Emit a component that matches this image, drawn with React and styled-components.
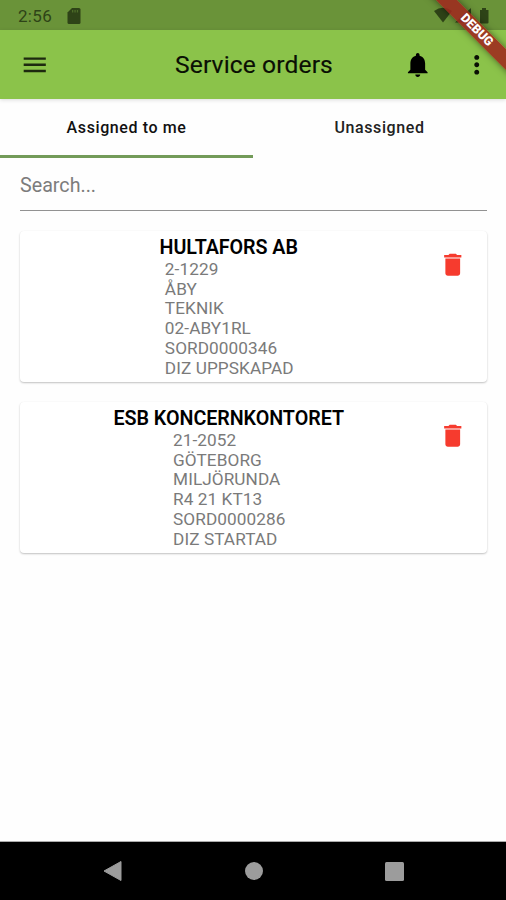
import React from "react";
import styled, { createGlobalStyle } from "styled-components";

const Global = createGlobalStyle`
  *, *::before, *::after { box-sizing: border-box; }
  body { margin: 0; font-family: Roboto, "Liberation Sans", sans-serif; color: #000; }
`;

const Screen = styled.div`
  position: relative;
  display: flex;
  flex-direction: column;
  width: 506px;
  height: 900px;
  overflow: hidden;
  background: #fefefe;
`;

const StatusBar = styled.div`
  display: flex;
  align-items: center;
  height: 30px;
  flex: none;
  padding: 1px 16px 0 18px;
  background: #6a9339;
  color: #2e4317;
`;

const Clock = styled.span`
  width: 49px;
  font-size: 17px;
  line-height: 20px;
  letter-spacing: 0.3px;
`;

const StatusIcons = styled.div`
  display: flex;
  align-items: center;
  margin-left: auto;
`;

const Glyph = styled.svg`
  display: block;
  flex: none;
  fill: currentColor;
`;

const AppBar = styled.header`
  display: grid;
  grid-template-columns: 70px 1fr 60px 58px;
  align-items: center;
  justify-items: center;
  height: 69px;
  flex: none;
  z-index: 1;
  background: #8bc34a;
  box-shadow: 0 1px 4px rgba(0, 0, 0, 0.14);
`;

const IconButton = styled.button`
  display: flex;
  padding: 0;
  border: 0;
  background: none;
  color: ${(p) => p.$color || "#0a0f04"};
`;

const Title = styled.h1`
  margin: 0;
  padding: 1px 0 0 50px;
  justify-self: center;
  color: #0a0f04;
  font-size: 24.6px;
  font-weight: 400;
  line-height: 30px;
  letter-spacing: 0.12px;
  white-space: nowrap;
  -webkit-text-stroke: 0.15px currentColor;
`;

const Tabs = styled.nav`
  display: flex;
  height: 59px;
  flex: none;
`;

const Tab = styled.button`
  flex: 1;
  padding: 1px 0 0;
  border: 0;
  border-bottom: 3px solid ${(p) => (p.$active ? "#739b59" : "transparent")};
  background: none;
  color: ${(p) => (p.$active ? "#111" : "#222")};
  font: 500 16px/20px Roboto, sans-serif;
  letter-spacing: 0.6px;
`;

const Search = styled.input`
  height: 53px;
  flex: none;
  margin: 0 19px 0 20px;
  padding: 2px 0 0;
  border: 0;
  border-bottom: 1.5px solid #929292;
  border-radius: 0;
  outline: 0;
  background: none;
  font: 400 19.7px/24px Roboto, sans-serif;
  &::placeholder { color: #7c7c7c; opacity: 1; }
`;

const Orders = styled.main`
  display: flex;
  flex: 1;
  flex-direction: column;
  gap: 20px;
  padding: 20px 19px 0 20px;
`;

const Card = styled.article`
  display: flex;
  height: 151px;
  padding: 5px 20px 0 0;
  border-radius: 4px;
  background: #fff;
  box-shadow: 0 1px 2px rgba(0, 0, 0, 0.24), 0 0 1px rgba(0, 0, 0, 0.04);
`;

const CardBody = styled.div`
  display: flex;
  flex: 1;
  flex-direction: column;
  align-items: center;
`;

const Customer = styled.h2`
  margin: 0 0 1px;
  font-size: 19.7px;
  font-weight: 600;
  line-height: 23px;
  letter-spacing: -0.05px;
`;

const Details = styled.div`
  padding-left: 1px;
  color: #7a7a7a;
  font-size: 17.2px;
  line-height: 19.7px;
  letter-spacing: 0.08px;
`;

const DeleteSlot = styled.div`
  padding-top: 14px;
`;

const NavBar = styled.footer`
  display: grid;
  grid-template-columns: 112px 1fr 112px;
  align-items: center;
  justify-items: center;
  height: 58px;
  flex: none;
  padding: 0 56px 0 57px;
  background: #000;
  color: #9c9c9c;
  box-shadow: 0 -1px 0 #ababab;
`;

/* Ribbon lies across the top right corner, over both bars. */
const Ribbon = styled.div`
  position: absolute;
  z-index: 2;
  top: 22.3px;
  left: 417px;
  width: 118px;
  height: 14.8px;
  padding-left: 2px;
  transform: rotate(45deg);
  background: rgba(158, 40, 30, 0.87);
  box-shadow: 0 0 7px rgba(0, 0, 0, 0.5);
  color: #fff;
  font-size: 12.5px;
  font-weight: 900;
  line-height: 14px;
  text-align: center;
`;

const paths = {
  menu: "M3 18h18v-2H3v2zm0-5h18v-2H3v2zm0-7v2h18V6H3z",
  bell: "M12 22c1.1 0 2-.9 2-2h-4c0 1.1.9 2 2 2zm6-6v-5c0-3.07-1.63-5.64-4.5-6.32V4c0-.83-.67-1.5-1.5-1.5s-1.5.67-1.5 1.5v.68C7.64 5.36 6 7.92 6 11v5l-2 2v1h16v-1l-2-2z",
  more: "M12 8c1.1 0 2-.9 2-2s-.9-2-2-2-2 .9-2 2 .9 2 2 2zm0 2c-1.1 0-2 .9-2 2s.9 2 2 2 2-.9 2-2-.9-2-2-2zm0 6c-1.1 0-2 .9-2 2s.9 2 2 2 2-.9 2-2-.9-2-2-2z",
  trash: "M6 19c0 1.1.9 2 2 2h8c1.1 0 2-.9 2-2V7H6v12zM19 4h-3.500l-1-1h-5l-1 1H5v2h14V4z",
};

function Icon({ name }) {
  return (
    <Glyph width="29.5" height="29.5" viewBox="0 0 24 24" aria-hidden="true">
      <path d={paths[name]} />
    </Glyph>
  );
}

const orders = [
  {
    customer: "HULTAFORS AB",
    details: ["2-1229", "ÅBY", "TEKNIK", "02-ABY1RL", "SORD0000346", "DIZ UPPSKAPAD"],
  },
  {
    customer: "ESB KONCERNKONTORET",
    details: ["21-2052", "GÖTEBORG", "MILJÖRUNDA", "R4 21 KT13", "SORD0000286", "DIZ STARTAD"],
  },
];

function OrderCard({ order }) {
  return (
    <Card>
      <CardBody>
        <Customer>{order.customer}</Customer>
        <Details>
          {order.details.map((line) => (
            <div key={line}>{line}</div>
          ))}
        </Details>
      </CardBody>
      <DeleteSlot>
        <IconButton $color="#f63b2e" aria-label="Delete order">
          <Icon name="trash" />
        </IconButton>
      </DeleteSlot>
    </Card>
  );
}

export default function App() {
  return (
    <>
      <Global />
      <Screen>
        <StatusBar>
          <Clock>2:56</Clock>
          <Glyph width="14" height="16" viewBox="0 0 14 16">
            <path d="M5 0h7a1.500 1.500 0 0 1 1.500 1.500v13A1.500 1.500 0 0 1 12 16H2a1.500 1.500 0 0 1-1.500-1.500V4.500z" />
            <path d="M5 2h1.300v2.500H5zM7.400 2h1.300v2.500H7.400zM9.800 2h1.300v2.500H9.800z" fill="#4d6d29" />
          </Glyph>
          <StatusIcons>
            <Glyph width="56" height="17" viewBox="0 0 56 17">
              <path d="M0 4Q9 -2.500 18 4L9 15.500z" />
              <path d="M37 1v14.500H21z" />
              <path d="M46 3h2V1h4v2h2.500v12.500a1 1 0 0 1-1 1H47a1 1 0 0 1-1-1z" />
            </Glyph>
          </StatusIcons>
        </StatusBar>
        <AppBar>
          <IconButton aria-label="Menu" $color="#1d290f"><Icon name="menu" /></IconButton>
          <Title>Service orders</Title>
          <IconButton aria-label="Notifications" $color="#000"><Icon name="bell" /></IconButton>
          <IconButton aria-label="More options"><Icon name="more" /></IconButton>
        </AppBar>
        <Tabs>
          <Tab $active>Assigned to me</Tab>
          <Tab>Unassigned</Tab>
        </Tabs>
        <Search placeholder="Search..." />
        <Orders>
          {orders.map((order) => (
            <OrderCard key={order.customer} order={order} />
          ))}
        </Orders>
        <NavBar>
          <Glyph width="20" height="22" viewBox="0 0 20 22">
            <path d="M18 1.500v19L1 11z" stroke="currentColor" strokeLinejoin="round" />
          </Glyph>
          <Glyph width="18" height="18" viewBox="0 0 18 18">
            <circle cx="9" cy="9" r="9" />
          </Glyph>
          <Glyph width="19" height="19" viewBox="0 0 19 19">
            <rect width="19" height="19" rx="1.500" />
          </Glyph>
        </NavBar>
        <Ribbon>DEBUG</Ribbon>
      </Screen>
    </>
  );
}
